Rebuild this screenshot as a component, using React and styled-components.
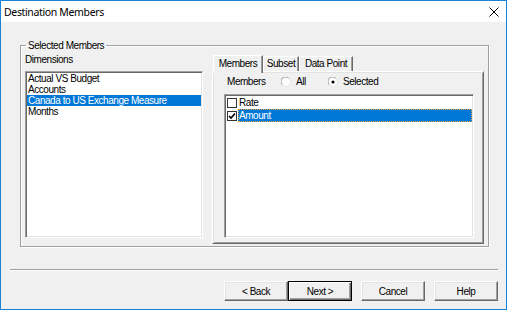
import React from "react";
import styled, { createGlobalStyle } from "styled-components";

const GlobalStyle = createGlobalStyle`
  html, body {
    margin: 0;
    padding: 0;
    background: #ffffff;
  }
  * {
    box-sizing: border-box;
  }
`;

const Window = styled.div`
  width: 507px;
  height: 310px;
  border: 1px solid #1883d7;
  background: #f0f0f0;
  display: flex;
  flex-direction: column;
  font-family: "Liberation Sans", Arial, sans-serif;
  font-size: 10px;
  letter-spacing: -0.45px;
  color: #000;
`;

const TitleBar = styled.div`
  height: 21px;
  flex: none;
  background: #fff;
  display: flex;
  align-items: center;
  justify-content: space-between;
  padding: 0 7px 0 3px;
`;

const Title = styled.span`
  font-family: "Noto Sans", "Liberation Sans", sans-serif;
  font-size: 10.5px;
  letter-spacing: -0.35px;
  color: #000;
`;

const CloseIcon = () => (
  <svg width="10" height="10" viewBox="0 0 10 10">
    <path d="M0.5 0.5 L9.5 9.5 M9.5 0.5 L0.5 9.5" stroke="#000" strokeWidth="1" />
  </svg>
);

const Content = styled.div`
  flex: 1;
  display: flex;
  flex-direction: column;
  padding: 17px 8px 8px 9px;
`;

const GroupBox = styled.fieldset`
  margin: 0 9px 0 10px;
  padding: 1px 4px 2px 4px;
  border: 1px solid #a0a0a0;
  box-shadow: inset 1px 1px #fff, 1px 1px #fff;
  min-inline-size: 0;
  display: grid;
  grid-template-columns: 178px 272px;
  column-gap: 9px;
  align-items: start;
`;

const Legend = styled.legend`
  padding: 0 2px;
  margin-left: 1px;
  line-height: 13px;
`;

const Column = styled.div`
  display: flex;
  flex-direction: column;
`;

const Label = styled.div`
  line-height: 13px;
  height: 13px;
  margin-left: ${(p) => p.$indent || 0}px;
  width: ${(p) => (p.$width ? `${p.$width}px` : "auto")};
  flex: none;
`;

const ListBox = styled.div`
  margin-top: 5px;
  height: 167px;
  background: #fff;
  border: 1px solid;
  border-color: #a0a0a0 #fff #fff #a0a0a0;
  box-shadow: inset 1px 1px #696969, inset -1px -1px #e3e3e3;
  padding: 1px;
`;

const ListItem = styled.div`
  height: 11px;
  line-height: 11px;
  padding-left: 1px;
  white-space: nowrap;
  background: ${(p) => (p.$selected ? "#0078d7" : "transparent")};
  color: ${(p) => (p.$selected ? "#fff" : "#000")};
`;

const TabStrip = styled.div`
  height: 18px;
  display: flex;
  align-items: flex-end;
  padding-left: 1px;
`;

const Tab = styled.div`
  position: relative;
  width: ${(p) => p.$width}px;
  height: ${(p) => (p.$active ? 18 : 15)}px;
  margin-bottom: ${(p) => (p.$active ? -2 : 0)}px;
  z-index: ${(p) => (p.$active ? 1 : 0)};
  background: #f0f0f0;
  border-top: 1px solid #fff;
  border-left: 1px solid #fff;
  border-right: 1px solid #696969;
  box-shadow: inset -1px 0 #a0a0a0;
  display: flex;
  justify-content: center;
  padding-top: ${(p) => (p.$active ? 1 : 0)}px;
  line-height: 13px;
`;

const TabPanel = styled.div`
  height: 173px;
  border: 1px solid;
  border-color: #fff #696969 #696969 #fff;
  box-shadow: inset 1px 1px #e3e3e3, inset -1px -1px #a0a0a0;
  padding: 3px 9px 5px 11px;
  display: flex;
  flex-direction: column;
`;

const OptionRow = styled.div`
  display: flex;
  align-items: center;
  height: 13px;
`;

const RadioOption = styled.label`
  display: flex;
  align-items: center;
  gap: 5px;
  width: ${(p) => p.$width}px;
  line-height: 13px;
`;

const Radio = ({ checked }) => (
  <svg width="10" height="10" viewBox="0 0 10 10">
    <circle cx="5" cy="5" r="4.5" fill="#fff" stroke="#e3e3e3" />
    <path d="M1.2 7.6 A4.5 4.5 0 0 1 7.6 1.2" fill="none" stroke="#a0a0a0" />
    {checked && <circle cx="5" cy="5" r="1.6" fill="#000" />}
  </svg>
);

const CheckList = styled.div`
  margin-top: 6px;
  flex: 1;
  background: #fff;
  border: 1px solid;
  border-color: #a0a0a0 #fff #fff #a0a0a0;
  box-shadow: inset 1px 1px #696969, inset -1px -1px #e3e3e3;
  padding: 1px;
`;

const CheckRow = styled.div`
  display: flex;
  align-items: center;
  height: 13px;
`;

const Box = styled.span`
  width: 10px;
  height: 10px;
  margin: 0 1px 0 1px;
  flex: none;
  border: 1px solid #333;
  background: #fff;
  display: flex;
  align-items: center;
  justify-content: center;
`;

const CheckMark = () => (
  <svg width="8" height="8" viewBox="0 0 8 8">
    <path d="M1 4 L3 6 L7 1.5" fill="none" stroke="#000" strokeWidth="1.6" />
  </svg>
);

const ItemText = styled.span`
  flex: ${(p) => (p.$selected ? 1 : "none")};
  height: 13px;
  line-height: 11px;
  border: 1px dotted ${(p) => (p.$selected ? "#f5a030" : "transparent")};
  background: ${(p) => (p.$selected ? "#0078d7" : "transparent")};
  color: ${(p) => (p.$selected ? "#fff" : "#000")};
`;

const Separator = styled.div`
  margin-top: 22px;
  height: 2px;
  border-top: 1px solid #a0a0a0;
  border-bottom: 1px solid #fff;
`;

const ButtonRow = styled.div`
  margin-top: 10px;
  display: flex;
  justify-content: flex-end;
  gap: 9px;
`;

const ButtonPair = styled.div`
  display: flex;
`;

const Button = styled.button`
  width: 64px;
  height: 20px;
  padding: 0;
  font: inherit;
  letter-spacing: inherit;
  color: #000;
  background: #f0f0f0;
  border: 1px solid;
  border-color: ${(p) => (p.$default ? "#000 #000 #000 #000" : "#fff #696969 #696969 #fff")};
  box-shadow: ${(p) =>
    p.$default
      ? "inset 1px 1px #fff, inset -1px -1px #696969, inset -2px -2px #a0a0a0"
      : "inset -1px -1px #a0a0a0, inset 1px 1px #e3e3e3"};
`;

const App = () => (
  <>
    <GlobalStyle />
    <Window>
      <TitleBar>
        <Title>Destination Members</Title>
        <CloseIcon />
      </TitleBar>
      <Content>
        <GroupBox>
          <Legend>Selected Members</Legend>
          <Column>
            <Label>Dimensions</Label>
            <ListBox>
              <ListItem>Actual VS Budget</ListItem>
              <ListItem>Accounts</ListItem>
              <ListItem $selected>Canada to US Exchange Measure</ListItem>
              <ListItem>Months</ListItem>
            </ListBox>
          </Column>
          <Column>
            <TabStrip>
              <Tab $active $width={50}>Members</Tab>
              <Tab $width={36}>Subset</Tab>
              <Tab $width={54}>Data Point</Tab>
            </TabStrip>
            <TabPanel>
              <OptionRow>
                <Label $indent={3} $width={54}>Members</Label>
                <RadioOption $width={47}>
                  <Radio />
                  All
                </RadioOption>
                <RadioOption>
                  <Radio checked />
                  Selected
                </RadioOption>
              </OptionRow>
              <CheckList>
                <CheckRow>
                  <Box />
                  <ItemText>Rate</ItemText>
                </CheckRow>
                <CheckRow>
                  <Box>
                    <CheckMark />
                  </Box>
                  <ItemText $selected>Amount</ItemText>
                </CheckRow>
              </CheckList>
            </TabPanel>
          </Column>
        </GroupBox>
        <Separator />
        <ButtonRow>
          <ButtonPair>
            <Button>&lt; Back</Button>
            <Button $default>Next &gt;</Button>
          </ButtonPair>
          <Button>Cancel</Button>
          <Button>Help</Button>
        </ButtonRow>
      </Content>
    </Window>
  </>
);

export default App;
